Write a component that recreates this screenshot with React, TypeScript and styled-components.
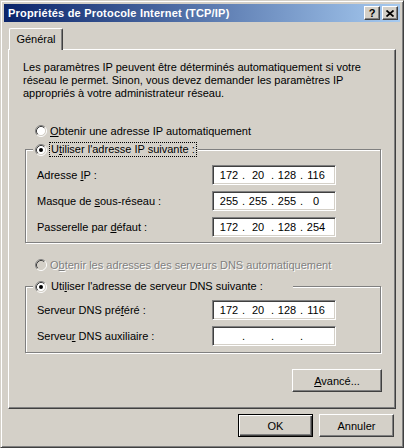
import React from "react";
import styled, { createGlobalStyle } from "styled-components";

const FACE = "#d4d0c8";
const SHADOW = "#808080";
const DARK = "#404040";

const GlobalStyle = createGlobalStyle`
  html, body {
    margin: 0;
    padding: 0;
    background: ${FACE};
  }
  body {
    font-family: "Liberation Sans", Arial, sans-serif;
    font-size: 11px;
    color: #000;
  }
  * {
    box-sizing: border-box;
  }
`;

const Window = styled.div`
  width: 404px;
  height: 448px;
  display: flex;
  flex-direction: column;
  background: ${FACE};
  border: 1px solid;
  border-color: ${FACE} ${DARK} ${DARK} ${FACE};
  box-shadow: inset 1px 1px 0 #fff, inset -1px -1px 0 ${SHADOW};
  padding: 3px;
`;

const TitleBar = styled.div`
  height: 18px;
  display: flex;
  align-items: center;
  padding: 0 2px;
  background: linear-gradient(to right, #0a246a, #a6caf0);
`;

const Title = styled.div`
  flex: 1;
  padding-left: 2px;
  color: #fff;
  font-weight: bold;
  font-size: 11px;
  letter-spacing: 0.2px;
  white-space: nowrap;
`;

const CaptionButtons = styled.div`
  display: flex;
  gap: 2px;
`;

const CaptionButton = styled.div`
  width: 16px;
  height: 14px;
  display: flex;
  align-items: center;
  justify-content: center;
  background: ${FACE};
  border: 1px solid;
  border-color: #fff ${DARK} ${DARK} #fff;
  box-shadow: inset -1px -1px 0 ${SHADOW};
  font-weight: bold;
  font-size: 11px;
  line-height: 1;
`;

const Client = styled.div`
  flex: 1;
  display: flex;
  flex-direction: column;
  padding: 6px 4px 7px 4px;
`;

const TabStrip = styled.div`
  height: 21px;
  display: flex;
  padding-left: 1px;
`;

const Tab = styled.div`
  position: relative;
  z-index: 1;
  width: 54px;
  height: 22px;
  display: flex;
  align-items: center;
  justify-content: center;
  padding-bottom: 2px;
  background: ${FACE};
  border-top: 1px solid #fff;
  border-left: 1px solid #fff;
  border-right: 1px solid ${DARK};
  border-radius: 2px 2px 0 0;
  box-shadow: inset -1px 0 0 ${SHADOW};
`;

const Panel = styled.div`
  height: 360px;
  display: flex;
  flex-direction: column;
  padding: 11px 13px 0 14px;
  border: 1px solid;
  border-color: #fff ${DARK} ${DARK} #fff;
  box-shadow: inset -1px -1px 0 ${SHADOW};
`;

const Intro = styled.p`
  margin: 0;
  line-height: 13px;
  white-space: nowrap;
`;

const RadioRow = styled.div<{ $top: number; $disabled?: boolean }>`
  display: flex;
  align-items: center;
  gap: 3px;
  height: 13px;
  margin: ${(p) => p.$top}px 0 0 12px;
  color: ${(p) => (p.$disabled ? SHADOW : "#000")};
  text-shadow: ${(p) => (p.$disabled ? "1px 1px 0 #fff" : "none")};
  white-space: nowrap;
`;

const Group = styled.div<{ $top: number; $padTop: number; $padBottom: number }>`
  position: relative;
  display: flex;
  flex-direction: column;
  gap: 6px;
  margin: ${(p) => p.$top}px 1px 0 2px;
  padding: ${(p) => p.$padTop}px 0 ${(p) => p.$padBottom}px 11px;
  border: 1px solid ${SHADOW};
  box-shadow: inset 1px 1px 0 #fff, 1px 1px 0 #fff;
`;

const Legend = styled.div<{ $width?: number }>`
  position: absolute;
  top: -8px;
  left: 7px;
  height: 15px;
  width: ${(p) => (p.$width ? `${p.$width}px` : "auto")};
  display: flex;
  align-items: center;
  gap: 2px;
  padding: 0 1px 0 2px;
  background: ${FACE};
  white-space: nowrap;
`;

const LegendText = styled.span<{ $focused?: boolean }>`
  line-height: 13px;
  padding: 0 1px;
  border: 1px ${(p) => (p.$focused ? "dotted #000" : "solid transparent")};
`;

const FieldRow = styled.div`
  display: flex;
  align-items: center;
  height: 20px;
`;

const FieldLabel = styled.div`
  width: 175px;
  white-space: nowrap;
`;

const IpBox = styled.div`
  width: 124px;
  height: 20px;
  display: flex;
  align-items: center;
  padding-left: 5px;
  background: #fff;
  border: 1px solid;
  border-color: ${SHADOW} #fff #fff ${SHADOW};
  box-shadow: inset 1px 1px 0 ${DARK}, inset -1px -1px 0 ${FACE};
`;

const Octet = styled.span`
  width: 22px;
  text-align: center;
`;

const Dot = styled.span`
  width: 7px;
  text-align: center;
`;

const Button = styled.button<{ $width: number; $default?: boolean }>`
  width: ${(p) => p.$width}px;
  height: 23px;
  padding: 0;
  font: inherit;
  color: #000;
  background: ${FACE};
  border: 1px solid;
  border-color: ${(p) =>
    p.$default ? "#000" : `#fff ${DARK} ${DARK} #fff`};
  box-shadow: ${(p) =>
    p.$default
      ? `inset 1px 1px 0 #fff, inset -1px -1px 0 ${DARK}, inset -2px -2px 0 ${SHADOW}`
      : `inset -1px -1px 0 ${SHADOW}`};
`;

const AdvancedButton = styled(Button)`
  align-self: flex-end;
  margin-top: 16px;
`;

const Footer = styled.div`
  display: flex;
  justify-content: flex-end;
  gap: 6px;
  margin-top: 5px;
  padding-right: 2px;
`;

const Radio: React.FC<{ checked?: boolean; disabled?: boolean }> = ({
  checked,
  disabled,
}) => (
  <svg width="12" height="12" viewBox="0 0 12 12" style={{ flex: "none" }}>
    <circle cx="6" cy="6" r="4.5" fill={disabled ? FACE : "#fff"} />
    <path d="M2.11 9.89 A5.5 5.5 0 0 1 9.89 2.11" fill="none" stroke={SHADOW} />
    <path d="M9.89 2.11 A5.5 5.5 0 0 1 2.11 9.89" fill="none" stroke="#fff" />
    <path d="M2.82 9.18 A4.5 4.5 0 0 1 9.18 2.82" fill="none" stroke={DARK} />
    <path d="M9.18 2.82 A4.5 4.5 0 0 1 2.82 9.18" fill="none" stroke={FACE} />
    {checked && <circle cx="6" cy="6" r="2" fill="#000" />}
  </svg>
);

const CloseGlyph = () => (
  <svg width="8" height="7" viewBox="0 0 8 7">
    <path d="M0.5 0.5 L7.5 6.5 M7.5 0.5 L0.5 6.5" stroke="#000" strokeWidth="1.7" />
  </svg>
);

const IpField: React.FC<{ value?: string[] }> = ({ value }) => {
  const parts = value ?? ["", "", "", ""];
  return (
    <IpBox>
      {parts.map((part, idx) => (
        <React.Fragment key={idx}>
          <Octet>{part}</Octet>
          {idx < 3 && <Dot>.</Dot>}
        </React.Fragment>
      ))}
    </IpBox>
  );
};

const ipRows = [
  { label: <>Adresse <u>I</u>P :</>, value: ["172", "20", "128", "116"] },
  { label: <>Masque de <u>s</u>ous-réseau :</>, value: ["255", "255", "255", "0"] },
  { label: <>Passerelle par <u>d</u>éfaut :</>, value: ["172", "20", "128", "254"] },
];

const App: React.FC = () => {
  return (
    <>
      <GlobalStyle />
      <Window>
        <TitleBar>
          <Title>Propriétés de Protocole Internet (TCP/IP)</Title>
          <CaptionButtons>
            <CaptionButton>?</CaptionButton>
            <CaptionButton>
              <CloseGlyph />
            </CaptionButton>
          </CaptionButtons>
        </TitleBar>
        <Client>
          <TabStrip>
            <Tab>Général</Tab>
          </TabStrip>
          <Panel>
            <Intro>
              Les paramètres IP peuvent être déterminés automatiquement si votre
              <br />
              réseau le permet. Sinon, vous devez demander les paramètres IP
              <br />
              appropriés à votre administrateur réseau.
            </Intro>

            <RadioRow $top={24}>
              <Radio />
              <span>
                <u>O</u>btenir une adresse IP automatiquement
              </span>
            </RadioRow>

            <Group $top={12} $padTop={15} $padBottom={5}>
              <Legend>
                <Radio checked />
                <LegendText $focused>
                  U<u>t</u>iliser l'adresse IP suivante :
                </LegendText>
              </Legend>
              {ipRows.map((row, idx) => (
                <FieldRow key={idx}>
                  <FieldLabel>{row.label}</FieldLabel>
                  <IpField value={row.value} />
                </FieldRow>
              ))}
            </Group>

            <RadioRow $top={15} $disabled>
              <Radio disabled />
              <span>
                O<u>b</u>tenir les adresses des serveurs DNS automatiquement
              </span>
            </RadioRow>

            <Group $top={15} $padTop={13} $padBottom={6}>
              <Legend $width={260}>
                <Radio checked />
                <LegendText>
                  Uti<u>l</u>iser l'adresse de serveur DNS suivante :
                </LegendText>
              </Legend>
              <FieldRow>
                <FieldLabel>
                  Serveur DNS pré<u>f</u>éré :
                </FieldLabel>
                <IpField value={["172", "20", "128", "116"]} />
              </FieldRow>
              <FieldRow>
                <FieldLabel>
                  Serveu<u>r</u> DNS auxiliaire :
                </FieldLabel>
                <IpField />
              </FieldRow>
            </Group>

            <AdvancedButton $width={90}>
              <u>A</u>vancé...
            </AdvancedButton>
          </Panel>
          <Footer>
            <Button $width={75} $default>
              OK
            </Button>
            <Button $width={75}>Annuler</Button>
          </Footer>
        </Client>
      </Window>
    </>
  );
};

export default App;
